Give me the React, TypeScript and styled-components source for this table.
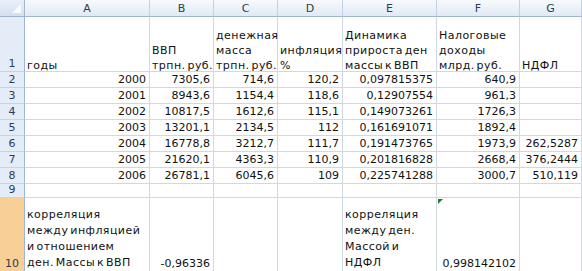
import React from 'react';
import styled, { createGlobalStyle } from 'styled-components';

const GlobalStyle = createGlobalStyle`
  html, body {
    margin: 0;
    padding: 0;
    background: #ffffff;
    overflow: hidden;
  }
`;

const Sheet = styled.div`
  display: grid;
  grid-template-columns: 25px 125px 64px 64px 65px 94px 83px 62px;
  grid-template-rows: 17px 55px repeat(7, 16px) 14px 74px;
  width: 582px;
  height: 271px;
  font-family: 'DejaVu Sans', 'Liberation Sans', sans-serif;
  font-size: 11px;
  color: #111;
  overflow: hidden;
`;

const Corner = styled.div`
  position: relative;
  background: linear-gradient(#e9f0f9, #d4e0ef);
  border-right: 1px solid #9eb6ce;
  border-bottom: 1px solid #9eb6ce;
  box-sizing: border-box;

  &::after {
    content: '';
    position: absolute;
    right: 3px;
    bottom: 3px;
    border-left: 9px solid transparent;
    border-bottom: 9px solid #ffffff;
    opacity: 0.9;
  }
`;

const ColHead = styled.div`
  display: flex;
  align-items: center;
  justify-content: center;
  padding-top: 1px;
  background: linear-gradient(#f7fafd, #e1e9f4);
  border-right: 1px solid #c2d1e3;
  border-bottom: 1px solid #9eb6ce;
  box-sizing: border-box;
  color: #2c3e50;
`;

const RowHead = styled.div<{ $active?: boolean }>`
  display: flex;
  align-items: flex-end;
  justify-content: center;
  background: ${(p) => (p.$active ? '#f8cf96' : '#e4ecf7')};
  border-right: 1px solid #9eb6ce;
  border-bottom: 1px solid ${(p) => (p.$active ? '#f1b76a' : '#c5d3e6')};
  box-sizing: border-box;
  color: #2c3e50;
  line-height: 15px;
`;

const Cell = styled.div<{ $num?: boolean; $lh?: number; $shift?: number }>`
  position: relative;
  display: flex;
  flex-direction: column;
  justify-content: flex-end;
  align-items: ${(p) => (p.$num ? 'flex-end' : 'flex-start')};
  padding: ${(p) => (p.$num ? '0 3px' : '0 1px 0 2px')};
  border-right: 1px solid #d0d7e5;
  border-bottom: 1px solid #d0d7e5;
  box-sizing: border-box;
  white-space: nowrap;
  line-height: ${(p) => p.$lh ?? 15}px;
  letter-spacing: ${(p) => (p.$num ? 0 : 0.45)}px;
  word-spacing: ${(p) => (p.$num ? 0 : -2)}px;

  & > span {
    transform: translateY(${(p) => p.$shift ?? 0}px);
  }
`;

const Marker = styled.i`
  position: absolute;
  top: 1px;
  left: 1px;
  border-top: 5px solid #1d7a2c;
  border-right: 5px solid transparent;
`;

const lines = (t: string) => t.split('\n').map((l, i) => <span key={i}>{l}</span>);

const data: string[][] = [
  ['2000', '7305,6', '714,6', '120,2', '0,097815375', '640,9', ''],
  ['2001', '8943,6', '1154,4', '118,6', '0,12907554', '961,3', ''],
  ['2002', '10817,5', '1612,6', '115,1', '0,149073261', '1726,3', ''],
  ['2003', '13201,1', '2134,5', '112', '0,161691071', '1892,4', ''],
  ['2004', '16778,8', '3212,7', '111,7', '0,191473765', '1973,9', '262,5287'],
  ['2005', '21620,1', '4363,3', '110,9', '0,201816828', '2668,4', '376,2444'],
  ['2006', '26781,1', '6045,6', '109', '0,225741288', '3000,7', '510,119'],
];

const headers = ['годы', 'ВВП\nтрпн. руб.', 'денежная\nмасса\nтрпн. руб.', 'инфляция\n%', 'Динамика\nприроста ден\nмассы к ВВП', 'Налоговые\nдоходы\nмлрд. руб.', 'НДФЛ'];

export default function App() {
  return (
    <>
      <GlobalStyle />
      <Sheet>
        <Corner />
        {['A', 'B', 'C', 'D', 'E', 'F', 'G'].map((c) => (
          <ColHead key={c}>{c}</ColHead>
        ))}

        <RowHead>1</RowHead>
        {headers.map((h, i) => (
          <Cell key={i} $shift={2}>
            {lines(h)}
          </Cell>
        ))}

        {data.map((row, r) => (
          <React.Fragment key={r}>
            <RowHead>{r + 2}</RowHead>
            {row.map((v, i) => (
              <Cell key={i} $num>
                {v}
              </Cell>
            ))}
          </React.Fragment>
        ))}

        <RowHead>9</RowHead>
        {[0, 1, 2, 3, 4, 5, 6].map((i) => (
          <Cell key={i} />
        ))}

        <RowHead $active>10</RowHead>
        <Cell $lh={16}>{lines('корреляция\nмежду инфляцией\nи отношением\nден. Массы к ВВП')}</Cell>
        <Cell $num>-0,96336</Cell>
        <Cell />
        <Cell />
        <Cell $lh={16}>{lines('корреляция\nмежду ден.\nМассой и\nНДФЛ')}</Cell>
        <Cell $num>
          <Marker />
          0,998142102
        </Cell>
        <Cell />
      </Sheet>
    </>
  );
}
